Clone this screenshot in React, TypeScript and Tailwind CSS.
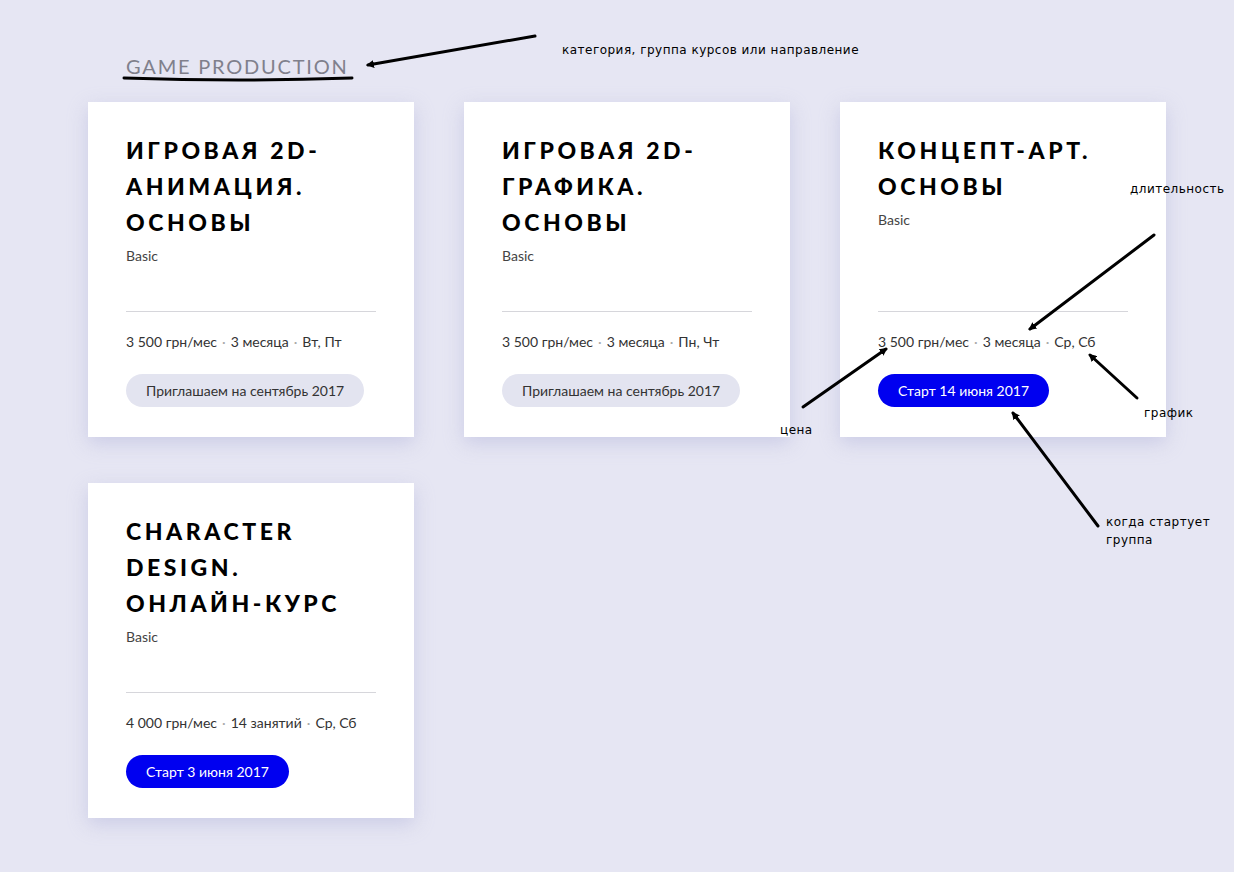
import React from "react";

type Course = {
  title: string[];
  level: string;
  price: string;
  length: string;
  days: string;
  start: string;
  open: boolean;
};

const courses: Course[] = [
  {
    title: ["Игровая 2D-", "анимация.", "Основы"],
    level: "Basic",
    price: "3 500 грн/мес",
    length: "3 месяца",
    days: "Вт, Пт",
    start: "Приглашаем на сентябрь 2017",
    open: false,
  },
  {
    title: ["Игровая 2D-", "графика.", "Основы"],
    level: "Basic",
    price: "3 500 грн/мес",
    length: "3 месяца",
    days: "Пн, Чт",
    start: "Приглашаем на сентябрь 2017",
    open: false,
  },
  {
    title: ["Концепт-арт.", "Основы"],
    level: "Basic",
    price: "3 500 грн/мес",
    length: "3 месяца",
    days: "Ср, Сб",
    start: "Старт 14 июня 2017",
    open: true,
  },
  {
    title: ["Character", "design.", "Онлайн-курс"],
    level: "Basic",
    price: "4 000 грн/мес",
    length: "14 занятий",
    days: "Ср, Сб",
    start: "Старт 3 июня 2017",
    open: true,
  },
];

function CourseCard({ c }: { c: Course }) {
  return (
    <div className="bg-white pt-[30px] px-[38px] pb-[30px] shadow-[0_6px_18px_rgba(170,172,215,0.45)]">
      {/* Top */}
      <div className="h-[179px]">
        <h3 className="font-['Lato'] font-black text-[23px] leading-[36px] tracking-[0.155em] uppercase text-black">
          {c.title.map((t) => (
            <div key={t}>{t}</div>
          ))}
        </h3>
        <p className="mt-[6px] text-[14px] leading-[20px] text-[#444]">{c.level}</p>
      </div>

      <div className="border-t border-[#d6d6db]" />

      {/* Meta */}
      <p className="mt-[20px] text-[14px] leading-[20px] text-[#333] whitespace-nowrap">
        {c.price}
        <span className="text-[#aaa] mx-[5px]">·</span>
        {c.length}
        <span className="text-[#aaa] mx-[5px]">·</span>
        {c.days}
      </p>

      <div className="mt-[22px]">
        <span
          className={
            c.open
              ? "inline-flex items-center h-[33px] px-[20px] rounded-full bg-[#0000f0] text-white text-[14px]"
              : "inline-flex items-center h-[33px] px-[20px] rounded-full bg-[#e3e4f0] text-[#333] text-[14px]"
          }
        >
          {c.start}
        </span>
      </div>
    </div>
  );
}

function Notes() {
  return (
    <div className="absolute inset-0 pointer-events-none font-['DejaVu_Sans'] text-[12px] text-black tracking-[0.04em]">
      <svg className="absolute inset-0" width="1234" height="872" viewBox="0 0 1234 872">
        <defs>
          <marker id="ah" markerWidth="8" markerHeight="8" refX="6" refY="4" orient="auto" markerUnits="userSpaceOnUse">
            <path d="M0 0 L8 4 L0 8 Z" fill="#000" />
          </marker>
        </defs>
        <g stroke="#000" strokeWidth="3" fill="none" strokeLinecap="round">
          <path d="M124 78 Q240 82 352 78" />
          <path d="M535 36 L368 65" markerEnd="url(#ah)" />
          <path d="M1154 235 L1030 329" markerEnd="url(#ah)" />
          <path d="M803 407 L886 349" markerEnd="url(#ah)" />
          <path d="M1137 398 L1090 355" markerEnd="url(#ah)" />
          <path d="M1098 526 L1013 413" markerEnd="url(#ah)" />
        </g>
      </svg>
      <div className="absolute left-[562px] top-[41px]">категория, группа курсов или направление</div>
      <div className="absolute left-[1130px] top-[180px]">длительность</div>
      <div className="absolute left-[780px] top-[421px]">цена</div>
      <div className="absolute left-[1144px] top-[404px]">график</div>
      <div className="absolute left-[1106px] top-[513px] leading-[18px]">
        когда стартует
        <br />
        группа
      </div>
    </div>
  );
}

export default function App() {
  return (
    <div className="relative min-h-[872px] bg-[#e6e6f3] font-['Lato'] px-[88px] pt-[54px] pb-[54px]">
      {/* Category */}
      <h2 className="pl-[38px] text-[20px] leading-[24px] tracking-[0.09em] uppercase text-[#80808c] font-normal">
        Game Production
      </h2>

      {/* Cards */}
      <div className="mt-[24px] grid grid-cols-[326px_326px_326px] gap-x-[50px] gap-y-[46px]">
        {courses.map((c) => (
          <CourseCard key={c.title.join()} c={c} />
        ))}
      </div>

      <Notes />
    </div>
  );
}
